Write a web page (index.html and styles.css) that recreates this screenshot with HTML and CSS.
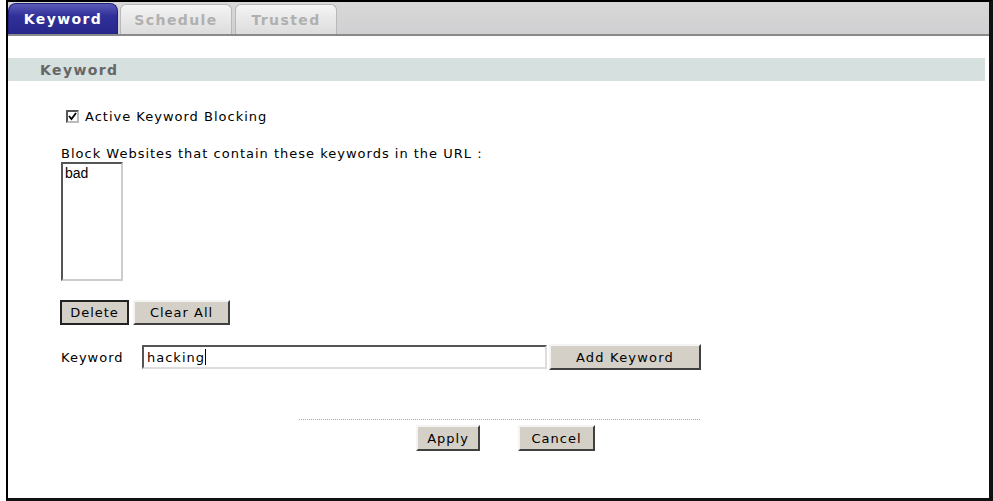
FILE: index.html
```html
<!DOCTYPE html>
<html>
<head>
<meta charset="utf-8">
<link rel="stylesheet" href="styles.css">
</head>
<body>
<div class="frame">
  <div class="tabbar">
    <div class="tab active">Keyword</div>
    <div class="tab">Schedule</div>
    <div class="tab">Trusted</div>
  </div>
  <div class="section-head">Keyword</div>
  <div class="content">
    <label class="check-row">
      <span class="checkbox"><svg width="9" height="9" viewBox="0 0 9 9"><path d="M1 4 L3.5 7 L8 1" fill="none" stroke="#000" stroke-width="1.8"/></svg></span>
      <span>Active Keyword Blocking</span>
    </label>
    <div class="block-label">Block Websites that contain these keywords in the URL :</div>
    <div class="listbox"><div class="list-item">bad</div></div>
    <div class="btn-row">
      <button class="btn btn-delete">Delete</button>
      <button class="btn btn-clear">Clear All</button>
    </div>
    <div class="kw-row">
      <span class="kw-label">Keyword</span>
      <div class="kw-input">hacking<span class="caret"></span></div>
      <button class="btn btn-add">Add Keyword</button>
    </div>
    <div class="footer">
      <div class="dots"></div>
      <div class="footer-btns">
        <button class="btn btn-apply">Apply</button>
        <button class="btn btn-cancel">Cancel</button>
      </div>
    </div>
  </div>
</div>
</body>
</html>
```
FILE: styles.css
```css
html, body {
  margin: 0;
  padding: 0;
  background: #fff;
}
body {
  font-family: "DejaVu Sans", Verdana, sans-serif;
  font-size: 13px;
  letter-spacing: 1px;
  color: #000;
}
.frame {
  margin-left: 6px;
  width: 981px;
  height: 496px;
  border-left: 2px solid #000;
  border-top: 2px solid #000;
  border-right: 4px solid #111;
  border-bottom: 3px solid #111;
  background: #fff;
  overflow: hidden;
}
.tabbar {
  display: flex;
  align-items: flex-end;
  height: 32px;
  background: linear-gradient(#d8d8d8, #d0d0d2);
  border-bottom: 2px solid #8a8a8a;
}
.tab {
  box-sizing: border-box;
  height: 30px;
  display: flex;
  align-items: center;
  justify-content: center;
  font-weight: bold;
  font-size: 14px;
  letter-spacing: 1.4px;
  color: #b0b0b0;
  background: linear-gradient(#f4f4f4, #dcdcdc);
  border: 1px solid #b8b8b8;
  border-bottom: none;
  border-radius: 6px 6px 0 0;
  margin-right: 2px;
  width: 112px;
}
.tab:nth-child(3) { width: 102px; margin-left: 1px; }
.tab.active {
  width: 110px;
  height: 31px;
  color: #fff;
  background: linear-gradient(#5a5ab8, #30309a 40%, #26268a);
  border-color: #20207a;
  border-radius: 8px 8px 0 0;
}
.section-head {
  margin-top: 22px;
  height: 23px;
  background: #d5e0df;
  display: flex;
  align-items: center;
  padding-left: 32px;
  font-weight: bold;
  font-size: 14px;
  letter-spacing: 1.4px;
  color: #666;
  margin-right: 4px;
}
.content {
  padding-left: 53px;
}
.check-row {
  display: flex;
  align-items: center;
  gap: 6px;
  margin-top: 27px;
  margin-left: 5px;
  height: 16px;
}
.checkbox {
  box-sizing: border-box;
  width: 13px;
  height: 13px;
  border: 2px solid #555;
  border-right-color: #bbb;
  border-bottom-color: #bbb;
  display: flex;
  align-items: center;
  justify-content: center;
  background: #fff;
}
.block-label {
  margin-top: 22px;
  line-height: 16px;
}
.listbox {
  box-sizing: border-box;
  width: 62px;
  height: 119px;
  margin-top: 0;
  border: 2px solid #555;
  border-right-color: #ccc;
  border-bottom-color: #ccc;
  padding: 1px 2px;
}
.list-item {
  font-family: "Liberation Sans", Arial, sans-serif;
  font-size: 14px;
  letter-spacing: 0;
  line-height: 16px;
}
.btn {
  font-family: "DejaVu Sans", Verdana, sans-serif;
  font-size: 13px;
  letter-spacing: 1px;
  color: #000;
  background: #d4d0c8;
  border: 2px solid;
  border-color: #f4f4f4 #404040 #404040 #f4f4f4;
  padding: 0;
  margin: 0;
  box-sizing: border-box;
  height: 25px;
}
.btn-row {
  display: flex;
  gap: 4px;
  margin-top: 19px;
  margin-left: -1px;
}
.btn-delete { width: 69px; border-color: #222; }
.btn-clear { width: 97px; }
.kw-row {
  display: flex;
  align-items: center;
  margin-top: 19px;
}
.kw-label { width: 81px; }
.kw-input {
  box-sizing: border-box;
  width: 405px;
  height: 24px;
  border: 2px solid #555;
  border-right-color: #ddd;
  border-bottom-color: #ddd;
  padding-left: 3px;
  display: flex;
  align-items: center;
}
.caret {
  display: inline-block;
  width: 1px;
  height: 16px;
  background: #000;
}
.btn-add { width: 152px; height: 26px; margin-left: 2px; letter-spacing: 1.2px; }
.footer {
  margin-top: 49px;
  margin-left: 238px;
  width: 401px;
}
.dots {
  border-top: 1px dotted #aaa;
  height: 0;
}
.footer-btns {
  display: flex;
  gap: 38px;
  margin-top: 5px;
  padding-left: 117px;
}
.btn-apply { width: 64px; height: 26px; }
.btn-cancel { width: 77px; height: 26px; }
```
